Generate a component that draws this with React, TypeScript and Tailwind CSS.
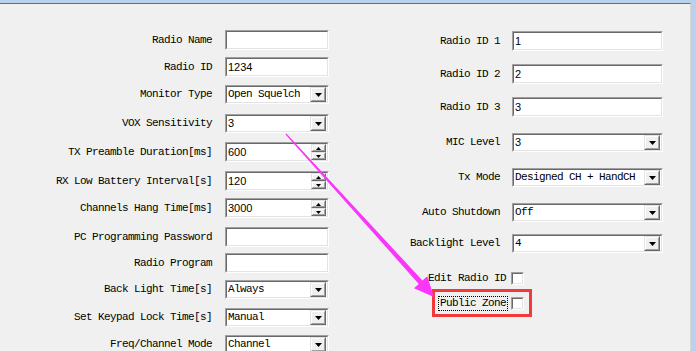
import type { ReactNode } from "react";

const mono = "font-['Liberation_Mono',monospace] text-[11px] tracking-[-0.6px] text-black";
const sans = "font-['Liberation_Sans',Arial,sans-serif] text-[11px] text-black";

type Row = {
  label: string;
  kind: "text" | "combo" | "spin";
  value?: string;
  sansValue?: boolean;
  mt: string;
  h: string;
};

const leftRows: Row[] = [
  { label: "Radio Name", kind: "text", mt: "mt-[26px]", h: "h-[20px]" },
  { label: "Radio ID", kind: "text", value: "1234", sansValue: true, mt: "mt-[7px]", h: "h-[20px]" },
  { label: "Monitor Type", kind: "combo", value: "Open Squelch", mt: "mt-[8px]", h: "h-[19px]" },
  { label: "VOX Sensitivity", kind: "combo", value: "3", sansValue: true, mt: "mt-[10px]", h: "h-[19px]" },
  { label: "TX Preamble Duration[ms]", kind: "spin", value: "600", sansValue: true, mt: "mt-[9px]", h: "h-[20px]" },
  { label: "RX Low Battery Interval[s]", kind: "spin", value: "120", sansValue: true, mt: "mt-[9px]", h: "h-[20px]" },
  { label: "Channels Hang Time[ms]", kind: "spin", value: "3000", sansValue: true, mt: "mt-[7px]", h: "h-[20px]" },
  { label: "PC Programming Password", kind: "text", mt: "mt-[9px]", h: "h-[20px]" },
  { label: "Radio Program", kind: "text", mt: "mt-[6px]", h: "h-[20px]" },
  { label: "Back Light Time[s]", kind: "combo", value: "Always", mt: "mt-[7px]", h: "h-[19px]" },
  { label: "Set Keypad Lock Time[s]", kind: "combo", value: "Manual", mt: "mt-[9px]", h: "h-[19px]" },
  { label: "Freq/Channel Mode", kind: "combo", value: "Channel", mt: "mt-[8px]", h: "h-[19px]" },
];

const rightRows: Row[] = [
  { label: "Radio ID 1", kind: "text", value: "1", sansValue: true, mt: "mt-[27px]", h: "h-[20px]" },
  { label: "Radio ID 2", kind: "text", value: "2", sansValue: true, mt: "mt-[13px]", h: "h-[20px]" },
  { label: "Radio ID 3", kind: "text", value: "3", sansValue: true, mt: "mt-[13px]", h: "h-[20px]" },
  { label: "MIC Level", kind: "combo", value: "3", sansValue: true, mt: "mt-[16px]", h: "h-[19px]" },
  { label: "Tx Mode", kind: "combo", value: "Designed CH + HandCH", mt: "mt-[16px]", h: "h-[19px]" },
  { label: "Auto Shutdown", kind: "combo", value: "Off", mt: "mt-[16px]", h: "h-[19px]" },
  { label: "Backlight Level", kind: "combo", value: "4", mt: "mt-[12px]", h: "h-[19px]" },
];

const Sunken = ({ className, children }: { className: string; children?: ReactNode }) => (
  <div className={`border border-t-[#a0a0a0] border-l-[#a0a0a0] border-r-white border-b-white ${className}`}>
    <div className="h-full border border-t-[#696969] border-l-[#696969] border-r-[#e3e3e3] border-b-[#e3e3e3] bg-white flex items-center">
      {children}
    </div>
  </div>
);

const Raised = ({ className, children }: { className: string; children?: ReactNode }) => (
  <div className={`border border-t-[#e3e3e3] border-l-[#e3e3e3] border-r-[#696969] border-b-[#696969] ${className}`}>
    <div className="h-full border border-t-white border-l-white border-r-[#a0a0a0] border-b-[#a0a0a0] bg-[#f0f0f0] flex items-center justify-center">
      {children}
    </div>
  </div>
);

const Control = ({ row, width }: { row: Row; width: string }) => {
  const textCls = row.sansValue ? sans : mono;
  return (
    <Sunken className={`${width} ${row.h}`}>
      <span className={`flex-1 pl-[1px] whitespace-nowrap overflow-hidden ${textCls}`}>{row.value}</span>
      {row.kind === "combo" && (
        <Raised className="w-[16px] h-[15px] mr-[1px]">
          <svg width="7" height="4" viewBox="0 0 7 4">
            <polygon points="0,0 7,0 3.5,4" fill="#000" />
          </svg>
        </Raised>
      )}
      {row.kind === "spin" && (
        <div className="flex flex-col mr-[1px]">
          <Raised className="w-[15px] h-[8px]">
            <svg width="5" height="3" viewBox="0 0 5 3">
              <polygon points="2.5,0 5,3 0,3" fill="#000" />
            </svg>
          </Raised>
          <Raised className="w-[15px] h-[8px]">
            <svg width="5" height="3" viewBox="0 0 5 3">
              <polygon points="0,0 5,0 2.5,3" fill="#000" />
            </svg>
          </Raised>
        </div>
      )}
    </Sunken>
  );
};

const CheckBox = () => <Sunken className="w-[13px] h-[13px]" />;

export default function App() {
  return (
    <div className="w-[696px] h-[351px] overflow-hidden bg-[#b9d1ea] relative">
      <div className="mt-[3px] w-[691px] h-[348px] border-t border-t-[#6e6e6e] border-r border-r-[#d6d6d6] bg-[#f0f0f0] flex">
        <div className="w-[350px] flex flex-col shrink-0">
          {leftRows.map((row) => (
            <div key={row.label} className={`flex items-center shrink-0 ${row.mt} ${row.h}`}>
              <span className={`w-[212px] text-right whitespace-nowrap ${mono}`}>{row.label}</span>
              <div className="ml-[13px]">
                <Control row={row} width="w-[104px]" />
              </div>
            </div>
          ))}
        </div>

        <div className="flex-1 flex flex-col">
          {rightRows.map((row) => (
            <div key={row.label} className={`flex items-center shrink-0 ${row.mt} ${row.h}`}>
              <span className={`w-[150px] text-right whitespace-nowrap ${mono}`}>{row.label}</span>
              <div className="ml-[12px]">
                <Control row={row} width="w-[151px]" />
              </div>
            </div>
          ))}

          <div className="mt-[19px] w-[174px] h-[13px] flex items-center justify-end gap-[5px]">
            <span className={`whitespace-nowrap ${mono}`}>Edit Radio ID</span>
            <CheckBox />
          </div>

          <div className="mt-[4px] ml-[82px] w-[100px] h-[28px] border-[3px] border-[#f23a3a] flex items-center pl-[3px] gap-[3px]">
            <span className={`border border-dotted border-black px-[1px] leading-[13px] whitespace-nowrap ${mono}`}>
              Public Zone
            </span>
            <CheckBox />
          </div>
        </div>
      </div>

      <svg className="absolute left-0 top-0 pointer-events-none" width="696" height="351" viewBox="0 0 696 351">
        <polygon
          points="286.4,133.6 422.45,280.5 427.3,276.2 434,297 414,288.2 418.75,283.9 285.6,134.4"
          fill="#f936f9"
        />
      </svg>
    </div>
  );
}
